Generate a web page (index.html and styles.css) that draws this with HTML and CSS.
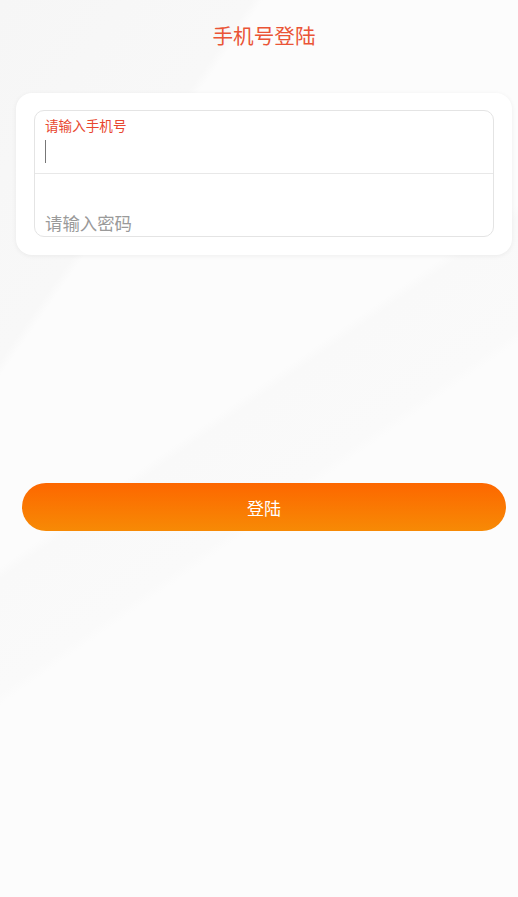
FILE: index.html
```html
<!DOCTYPE html>
<html lang="zh-CN">
<head>
    <meta charset="UTF-8">
    <meta name="viewport" content="width=device-width, initial-scale=1.0">
    <title>手机号登陆</title>

    <link rel="stylesheet" href="styles.css">
</head>
<body>
    <div class="page">
        <h1 class="title">手机号登陆</h1>

        <div class="card">
            <div class="fields">
                <div class="field field-phone">
                    <label class="field-label">请输入手机号</label>
                    <div class="field-input"><span class="caret"></span></div>
                </div>
                <div class="field field-pass">
                    <span class="placeholder">请输入密码</span>
                </div>
            </div>
        </div>

        <button class="btn-login" type="button">登陆</button>
    </div>
</body>
</html>
```

FILE: styles.css
```css
html, body{
    margin: 0;
    height: 100%;
}

body{
    font-family: "Noto Sans CJK SC", "Noto Sans", sans-serif;
    background-color: #fcfcfc;
    background-image:
        linear-gradient(125deg, #f6f6f6 0%, #f8f8f8 22%, rgba(252,252,252,0) 23%),
        linear-gradient(145deg, rgba(252,252,252,0) 45%, #f9f9f9 46%, #fafafa 55%, rgba(252,252,252,0) 56%);
}

.page{
    margin: 0 6px 0 16px;
    padding-top: 19px;
}

.title{
    margin: 0;
    text-align: center;
    font-size: 20.6px;
    font-weight: 400;
    line-height: 32px;
    color: #ea5436;
}

.card{
    margin-top: 42px;
    padding: 17px 18px 18px;
    background-color: #fff;
    border-radius: 16px;
    box-shadow: 0 1px 5px rgba(0, 0, 0, .06);
}

.fields{
    border: 1px solid #e4e4e4;
    border-radius: 10px;
    overflow: hidden;
}

.field{
    height: 62px;
    padding: 0 10px;
    box-sizing: border-box;
}

.field-phone{
    height: 63px;
    border-bottom: 1px solid #e8e8e8;
    padding-top: 5px;
}

.field-label{
    display: block;
    font-size: 13.6px;
    line-height: 18px;
    color: #e8472f;
}

.field-input{
    height: 26px;
    padding-top: 6px;
}

.caret{
    display: block;
    width: 1px;
    height: 23px;
    background-color: #777;
}

.field-pass{
    display: flex;
    align-items: flex-end;
    padding-bottom: 1px;
}

.placeholder{
    font-size: 17.4px;
    line-height: 24px;
    color: #9a9a9a;
}

.btn-login{
    display: block;
    width: calc(100% - 12px);
    height: 48px;
    margin: 228px auto 0;
    border: 0;
    border-radius: 24px;
    background: linear-gradient(180deg, #fd6700 0%, #f78a05 100%);
    color: #fff;
    font-family: inherit;
    font-size: 17px;
    cursor: pointer;
}
```
